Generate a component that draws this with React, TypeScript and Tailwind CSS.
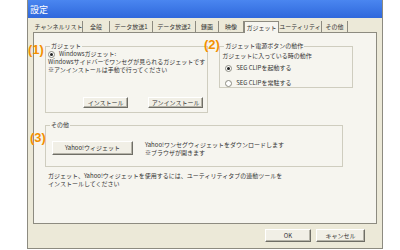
import React from "react";

const font = "font-['MS_UI_Gothic','Noto_Sans_CJK_JP',sans-serif]";

const tabs = [
  { name: "チャンネルリスト", w: "w-[48px]" },
  { name: "全般", w: "w-[27px]" },
  { name: "データ放送1", w: "w-[43px]" },
  { name: "データ放送2", w: "w-[43px]" },
  { name: "録画", w: "w-[23px]" },
  { name: "映像", w: "w-[25px]" },
  { name: "ガジェット", w: "w-[35px]", active: true },
  { name: "ユーティリティ", w: "w-[43px]" },
  { name: "その他", w: "w-[26px]" },
];

function Radio({ checked, label }: { checked?: boolean; label: string }) {
  return (
    <div className="flex items-center gap-[4px]">
      <span className="w-[7px] h-[7px] rounded-full border border-[#8a8a80] bg-white flex items-center justify-center">
        {checked && <span className="w-[3px] h-[3px] rounded-full bg-[#222]" />}
      </span>
      <span>{label}</span>
    </div>
  );
}

function Btn({ children, className }: { children: React.ReactNode; className: string }) {
  return (
    <div
      className={`flex items-center justify-center bg-[#f1efe6] border border-t-white border-l-white border-r-[#6f6e66] border-b-[#6f6e66] shadow-[inset_-1px_-1px_0_#b5b3a8] ${className}`}
    >
      {children}
    </div>
  );
}

function Note({ n }: { n: number }) {
  return <span className="text-[13px] leading-none font-bold text-[#f39000] font-['Liberation_Sans',sans-serif]">({n})</span>;
}

export default function App() {
  return (
    <div className={`w-[400px] h-[250px] bg-white flex ${font} text-[6px] leading-[8px] text-[#333] whitespace-nowrap`}>
      <div className="relative ml-[27px] w-[356px] h-[249px] bg-[#ece9d8] border-x border-b border-[#8d8b80] flex flex-col">
        {/* title bar */}
        <div className="h-[18px] bg-gradient-to-b from-[#4a86f0] to-[#2f68dc] flex items-center pl-[2px]">
          <span className="text-white text-[9px] leading-none">設定</span>
        </div>

        <div className="px-[5px] pt-[3px]">
          {/* tabs */}
          <div className="flex items-end h-[11px] pl-[2px]">
            {tabs.map((t) =>
              t.active ? (
                <div
                  key={t.name}
                  className={`${t.w} h-[12px] flex items-center justify-center bg-[#f6f5ef] border border-b-0 border-[#8d8b80] -mb-px relative z-10`}
                >
                  {t.name}
                </div>
              ) : (
                <div key={t.name} className={`${t.w} h-[11px] flex items-center justify-center border-r border-[#8d8b80]`}>
                  {t.name}
                </div>
              )
            )}
          </div>

          {/* panel */}
          <div className="h-[192px] bg-[#f6f5ef] border border-[#8d8b80] pt-[9px] pl-[11px]">
            <div className="flex items-start gap-[11px]">
              <fieldset className="w-[162px] h-[71px] border border-[#cfcdbf] px-[2px] flex flex-col">
                <legend className="px-[1px] ml-[2px]">ガジェット</legend>
                <Radio checked label="Windowsガジェット:" />
                <div>Windowsサイドバーでワンセグが見られるガジェットです</div>
                <div>※アンインストールは手動で行ってください</div>
                <div className="mt-auto mb-[4px] flex justify-end gap-[20px] pr-[2px]">
                  <Btn className="w-[45px] h-[11px]">インストール</Btn>
                  <Btn className="w-[55px] h-[11px]">アンインストール</Btn>
                </div>
              </fieldset>

              <fieldset className="w-[134px] h-[46px] border border-[#cfcdbf] px-[2px] flex flex-col">
                <legend className="px-[1px] ml-[2px]">ガジェット電源ボタンの動作</legend>
                <div className="mt-[2px]">ガジェットに入っている時の動作</div>
                <div className="mt-[4px] pl-[3px]">
                  <Radio checked label="SEG CLIPを起動する" />
                </div>
                <div className="mt-[7px] pl-[3px]">
                  <Radio label="SEG CLIPを常駐する" />
                </div>
              </fieldset>
            </div>

            <fieldset className="mt-[8px] w-[298px] h-[46px] border border-[#cfcdbf] px-[6px] flex items-center gap-[12px]">
              <legend className="px-[1px] ml-[-2px]">その他</legend>
              <Btn className="w-[81px] h-[14px]">Yahoo!ウィジェット</Btn>
              <div className="mt-[2px]">
                <div>Yahoo!ワンセグウィジェットをダウンロードします</div>
                <div>※ブラウザが開きます</div>
              </div>
            </fieldset>

            <div className="mt-[5px] pl-[3px]">
              <div>ガジェット、Yahoo!ウィジェットを使用するには、ユーティリティタブの連動ツールを</div>
              <div>インストールしてください</div>
            </div>
          </div>
        </div>

        {/* bottom buttons */}
        <div className="flex justify-end gap-[5px] pr-[17px] mt-[5px]">
          <Btn className="w-[46px] h-[13px]">OK</Btn>
          <Btn className="w-[49px] h-[13px]">キャンセル</Btn>
        </div>

        {/* annotations */}
        <div className="absolute left-[0px] top-[43px]"><Note n={1} /></div>
        <div className="absolute left-[176px] top-[38px]"><Note n={2} /></div>
        <div className="absolute left-[2px] top-[131px]"><Note n={3} /></div>
      </div>
    </div>
  );
}
